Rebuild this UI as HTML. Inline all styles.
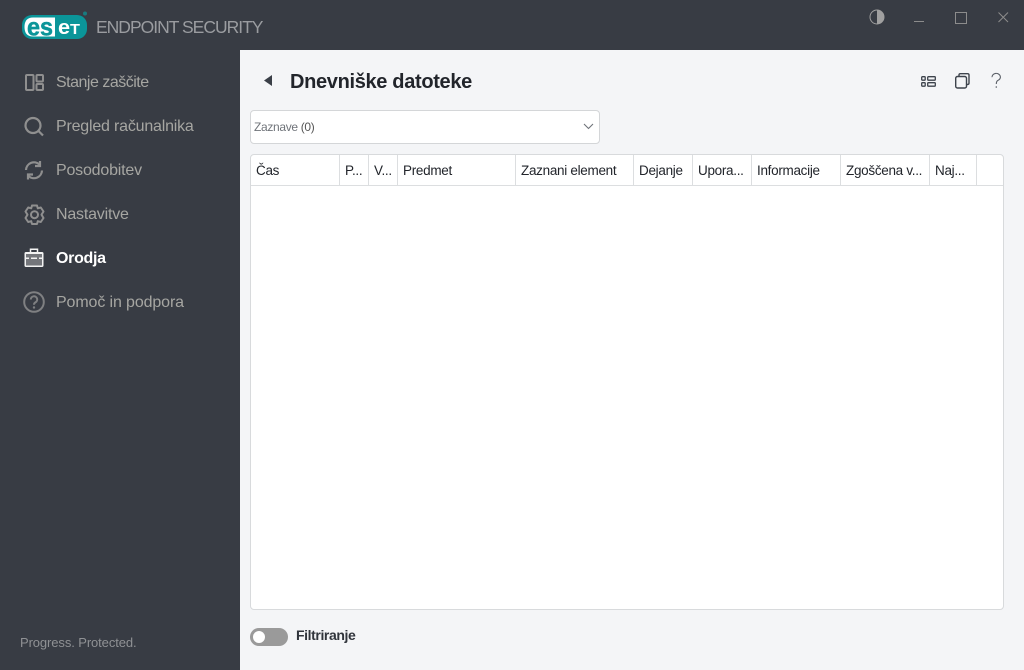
<!DOCTYPE html>
<html><head><meta charset="utf-8"><style>
html,body{margin:0;padding:0;width:1024px;height:670px;overflow:hidden;background:#f4f5f7;font-family:"Liberation Sans",sans-serif}
.a{position:absolute;white-space:nowrap}
#side{position:absolute;left:0;top:0;width:240px;height:670px;background:#383c44}
#top{position:absolute;left:0;top:0;width:1024px;height:50px;background:#383c44}
.nav{position:absolute;left:56px;font-size:16px;color:#a6a6a2;line-height:20px}
.th{position:absolute;top:155px;height:30px;line-height:31px;font-size:13.500px;letter-spacing:-.3px;color:#22252b;white-space:nowrap}
.sep{position:absolute;top:155px;width:1px;height:30px;background:#dcdee0}
svg{position:absolute;overflow:visible}
</style></head><body>
<div id="side"></div><div id="top"></div>

<svg style="left:22px;top:15px" width="65" height="24" viewBox="0 0 65 24">
<rect x="0" y="0" width="65" height="24" rx="10" fill="#0b9599"/>
<path d="M33 2.500H11Q2.500 2.500 2.500 12Q2.500 21.500 11 21.500H33Z" fill="#fff"/>
<text x="5" y="20.500" font-family="Liberation Sans" font-weight="700" font-size="25" fill="#0b9599" stroke="#0b9599" stroke-width=".5" textLength="26" lengthAdjust="spacingAndGlyphs">es</text>
<text x="36" y="19" font-family="Liberation Sans" font-weight="700" fill="#fff" textLength="22" lengthAdjust="spacingAndGlyphs"><tspan font-size="20">e</tspan><tspan font-size="15">T</tspan></text>
<circle cx="63" cy="-1.500" r="2" fill="#0b9599" opacity=".7"/>
</svg>
<div class="a" style="left:96px;top:16px;font-size:17.500px;line-height:22px;color:#9a9ca0;letter-spacing:-1px">ENDPOINT SECURITY</div>

<svg style="left:24px;top:72px" width="20" height="20" fill="none" stroke="#8f8f8f" stroke-width="2"><rect x="2" y="3" width="7.500" height="15" rx="1"/><rect x="12.500" y="3" width="6.500" height="6.500" rx="1"/><rect x="12.500" y="12" width="6.500" height="6" rx="1"/></svg>
<div class="nav" style="top:73px;letter-spacing:-.5px">Stanje zaščite</div>

<svg style="left:24px;top:116px" width="20" height="20" fill="none" stroke="#8f8f8f" stroke-width="2.200"><circle cx="9" cy="9.500" r="7.500"/><path d="M14.500 15L19 19.500"/></svg>
<div class="nav" style="top:117px;letter-spacing:-.2px">Pregled računalnika</div>

<svg style="left:24px;top:160px" width="20" height="20" fill="none" stroke="#8f8f8f" stroke-width="2.200"><path d="M2 10A8 8 0 0 1 15.500 4.500"/><path d="M18 10.500A8 8 0 0 1 4.500 16"/><path d="M16 1V6H11" /><path d="M4 19.500V14.500H9"/></svg>
<div class="nav" style="top:161px;letter-spacing:-.2px">Posodobitev</div>

<svg style="left:24px;top:204px" width="22" height="22" fill="none" stroke="#8f8f8f" stroke-width="2"><path d="M8 1.500H13L13.800 4.300L16.800 3.500L19.500 7.500L17.500 10.700L19.500 14L16.800 18L13.800 17.200L13 20H8L7.200 17.200L4.200 18L1.500 14L3.500 10.700L1.500 7.500L4.200 3.500L7.200 4.300Z" stroke-linejoin="round"/><circle cx="10.500" cy="10.700" r="3.500"/></svg>
<div class="nav" style="top:205px;letter-spacing:-.2px">Nastavitve</div>

<svg style="left:24px;top:248px" width="20" height="20"><path d="M6.500 4V1.200H13.500V4" fill="none" stroke="#f4f4f4" stroke-width="1.500"/><rect x="0.500" y="4" width="19" height="15" rx="1.500" fill="#f2f2f2"/><rect x="2" y="6" width="16" height="3.500" fill="#74767b"/><rect x="2" y="11" width="16" height="6.500" fill="#74767b"/><rect x="5" y="9" width="2" height="2.500" fill="#74767b"/><rect x="13" y="9" width="2" height="2.500" fill="#74767b"/></svg>
<div class="nav" style="top:249px;color:#fff;font-weight:700;letter-spacing:-.3px">Orodja</div>

<svg style="left:23px;top:291px" width="22" height="22" fill="none" stroke="#7f8082" stroke-width="2"><circle cx="11" cy="11" r="9.800"/><path d="M7.800 8.500A3.200 3.200 0 1 1 12.500 11.300Q11 12 11 13.800"/><circle cx="11" cy="16.500" r="1.200" fill="#7f8082" stroke="none"/></svg>
<div class="nav" style="top:293px;letter-spacing:-.12px">Pomoč in podpora</div>

<div class="a" style="left:20px;top:635px;font-size:13px;line-height:16px;color:#8f9194;letter-spacing:-.1px">Progress. Protected.</div>

<svg style="left:869px;top:9px" width="16" height="16"><circle cx="8" cy="8" r="7" fill="none" stroke="#a0a0a0" stroke-width="1"/><path d="M8 1A7 7 0 0 1 8 15Z" fill="#a0a0a0"/></svg>
<div class="a" style="left:914px;top:21px;width:10px;height:1px;background:#8c8c8c"></div>
<div class="a" style="left:955px;top:12px;width:10px;height:10px;border:1px solid #8c8c8c"></div>
<svg style="left:998px;top:12px" width="11" height="11" stroke="#8c8c8c" stroke-width="1"><path d="M.5 .5L10 10M10 .5L.5 10"/></svg>

<svg style="left:263px;top:75px" width="9" height="11"><path d="M9 0V11L1 5.500Z" fill="#3a3f47"/></svg>
<div class="a" style="left:290px;top:70px;font-size:20px;line-height:24px;font-weight:700;color:#22252b;letter-spacing:-.33px">Dnevniške datoteke</div>

<svg style="left:921px;top:76px" width="15" height="11" fill="none" stroke="#3d434c" stroke-width="1.300"><rect x=".7" y=".7" width="3.500" height="3.500" rx=".7"/><rect x=".7" y="6.700" width="3.500" height="3.500" rx=".7"/><rect x="6.700" y=".7" width="7.600" height="3.500" rx=".7"/><rect x="6.700" y="6.700" width="7.600" height="3.500" rx=".7"/></svg>
<svg style="left:955px;top:73px" width="15" height="16" fill="none" stroke="#3d434c" stroke-width="1.400"><path d="M4 3V2Q4 .7 5.300 .7H12.500Q14 .7 14 2V10Q14 11.500 12.500 11.500H11.500"/><rect x=".7" y="3.500" width="10.800" height="11.500" rx="1.800"/></svg>
<svg style="left:991px;top:73px" width="11" height="16" fill="none" stroke="#5a5f67" stroke-width="1.100"><path d="M1 4.200A4.200 3.700 0 1 1 6.800 7.500Q5.300 8.300 5.300 11"/><circle cx="5.300" cy="14" r=".8" fill="#5a5f67" stroke="none"/></svg>

<div class="a" style="left:250px;top:110px;width:348px;height:32px;background:#fff;border:1px solid #d4d6d8;border-radius:4px"></div>
<div class="a" style="left:254px;top:119px;font-size:12px;line-height:16px;color:#70747a;letter-spacing:-.33px">Zaznave <span style="color:#555">(0)</span></div>
<svg style="left:583px;top:123px" width="11" height="7" fill="none" stroke="#70747a" stroke-width="1.100"><path d="M1 1L5.500 5.500L10 1"/></svg>

<div class="a" style="left:250px;top:154px;width:752px;height:454px;background:#fff;border:1px solid #d8dadc;border-radius:4px"></div>
<div class="a" style="left:251px;top:185px;width:752px;height:1px;background:#dcdee0"></div>
<div class="sep" style="left:339px"></div><div class="sep" style="left:368px"></div><div class="sep" style="left:397px"></div><div class="sep" style="left:515px"></div><div class="sep" style="left:633px"></div><div class="sep" style="left:692px"></div><div class="sep" style="left:751px"></div><div class="sep" style="left:840px"></div><div class="sep" style="left:929px"></div><div class="sep" style="left:976px"></div>
<div class="th" style="left:256px">Čas</div>
<div class="th" style="left:345px">P...</div>
<div class="th" style="left:374px">V...</div>
<div class="th" style="left:403px">Predmet</div>
<div class="th" style="left:521px">Zaznani element</div>
<div class="th" style="left:639px">Dejanje</div>
<div class="th" style="left:698px">Upora...</div>
<div class="th" style="left:757px">Informacije</div>
<div class="th" style="left:846px">Zgoščena v...</div>
<div class="th" style="left:935px">Naj...</div>

<div class="a" style="left:250px;top:628px;width:38px;height:18px;border-radius:9px;background:#9a9a9a"></div>
<div class="a" style="left:253px;top:631px;width:12px;height:12px;border-radius:6px;background:#fff"></div>
<div class="a" style="left:296px;top:627px;font-size:14px;line-height:17px;font-weight:700;color:#30343b;letter-spacing:-.4px">Filtriranje</div>
</body></html>
